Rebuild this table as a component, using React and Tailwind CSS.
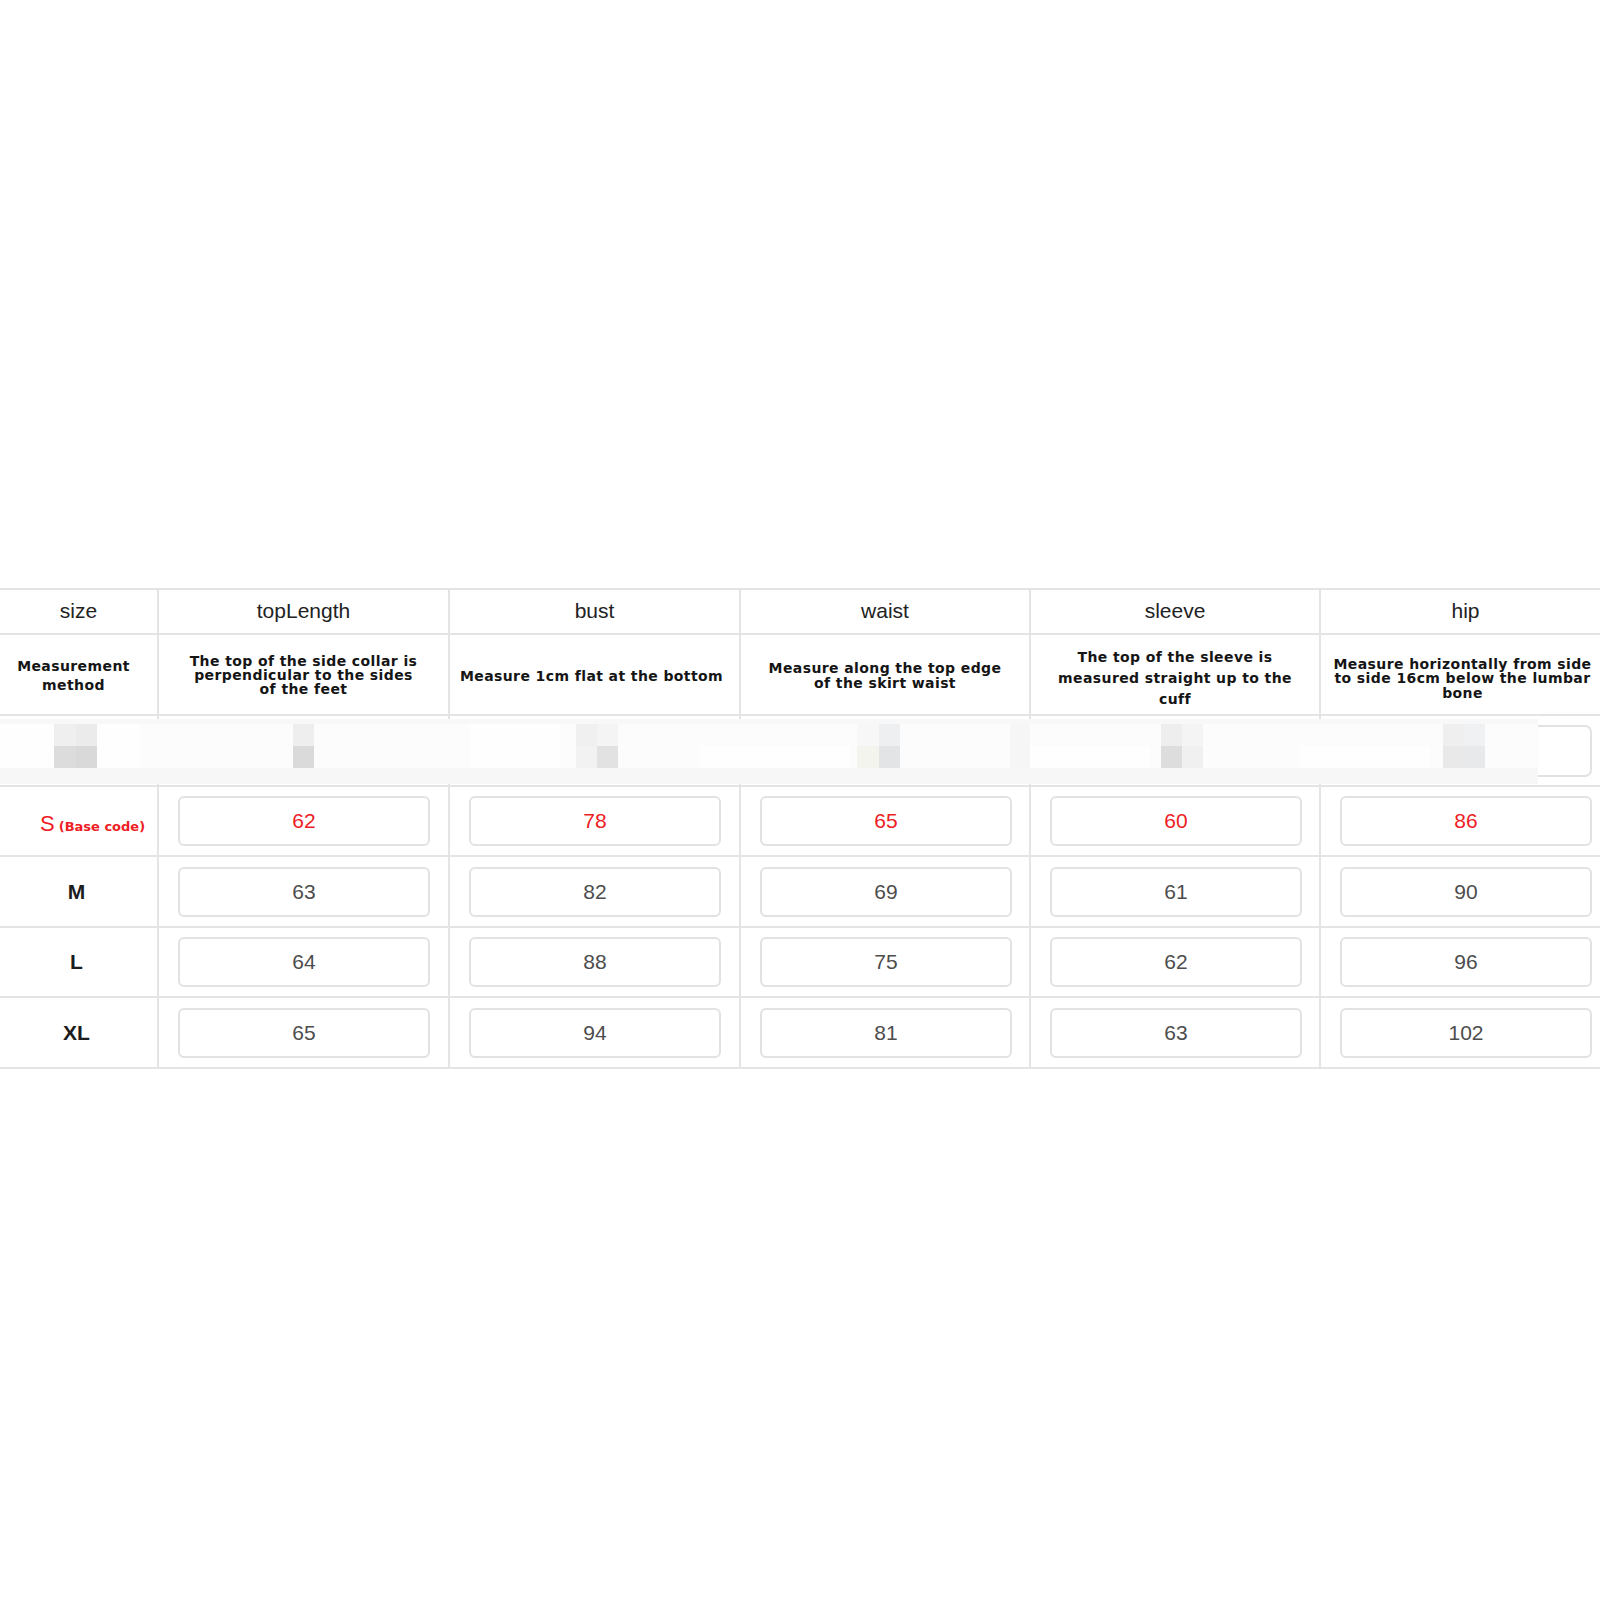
import React from "react";

const columns = [
  { key: "size", title: "size", width: "w-[159px]" },
  { key: "topLength", title: "topLength", width: "w-[291px]" },
  { key: "bust", title: "bust", width: "w-[291px]" },
  { key: "waist", title: "waist", width: "w-[290px]" },
  { key: "sleeve", title: "sleeve", width: "w-[290px]" },
  { key: "hip", title: "hip", width: "w-[291px]" },
];

const methods = [
  { lines: ["Measurement", "method"], leading: "leading-[19px]", extra: "pr-[10px] pt-[2px]" },
  { lines: ["The top of the side collar is", "perpendicular to the sides", "of the feet"], leading: "leading-[14px]", extra: "pt-[1px]" },
  { lines: ["Measure 1cm flat at the bottom"], leading: "leading-[15px]", extra: "pt-[3px] pr-[6px]" },
  { lines: ["Measure along the top edge", "of the skirt waist"], leading: "leading-[15px]", extra: "pt-[2px]" },
  { lines: ["The top of the sleeve is", "measured straight up to the", "cuff"], leading: "leading-[21px]", extra: "pt-[7px]" },
  { lines: ["Measure horizontally from side", "to side 16cm below the lumbar", "bone"], leading: "leading-[14.5px]", extra: "pt-[8px] pr-[6px]" },
];

const rows = [
  { size: "S", base: true, values: [62, 78, 65, 60, 86], h: "h-[70px]" },
  { size: "M", values: [63, 82, 69, 61, 90], h: "h-[71px]" },
  { size: "L", values: [64, 88, 75, 62, 96], h: "h-[70px]" },
  { size: "XL", values: [65, 94, 81, 63, 102], h: "h-[71px]" },
];

// pixelated picture strip that sits over the third row
const blocks = [
  [54, 8, 22, 22, "#efefef"], [76, 8, 21, 22, "#ebebeb"], [54, 30, 22, 22, "#dcdcdc"], [76, 30, 21, 22, "#d9d9d9"],
  [293, 8, 21, 22, "#eeeeee"], [293, 30, 21, 22, "#dadada"],
  [576, 8, 21, 22, "#f0f0f0"], [597, 8, 21, 22, "#f4f4f4"], [576, 30, 21, 22, "#f2f2f2"], [597, 30, 21, 22, "#e2e2e3"],
  [857, 8, 22, 22, "#f7f7f7"], [879, 8, 21, 22, "#eeeff1"], [857, 30, 22, 22, "#f4f4ee"], [879, 30, 21, 22, "#e3e4e5"],
  [1010, 8, 20, 44, "#f6f6f6"],
  [1161, 8, 21, 22, "#eeeeee"], [1182, 8, 21, 22, "#f4f4f4"], [1161, 30, 21, 22, "#dddddd"], [1182, 30, 21, 22, "#f0f0f0"],
  [1443, 8, 21, 22, "#efefef"], [1464, 8, 21, 22, "#f0f1f2"], [1443, 30, 21, 22, "#e9e9e9"], [1464, 30, 21, 22, "#e8e9ea"],
];

function Mosaic() {
  return (
    <svg className="absolute left-0 top-0" width="1600" height="69" viewBox="0 0 1600 69">
      <rect x="1341" y="10" width="250" height="50" rx="6" fill="#fff" stroke="#e2e2e4" strokeWidth="2" />
      <rect x="0" y="3" width="1538" height="65" fill="#fcfcfc" />
      <rect x="0" y="3" width="1538" height="5" fill="#f8f8f8" />
      <rect x="0" y="52" width="1538" height="16" fill="#f7f7f8" />
      <rect x="0" y="8" width="140" height="44" fill="#fefefe" />
      <rect x="470" y="8" width="90" height="44" fill="#fefefe" />
      <rect x="700" y="30" width="150" height="22" fill="#fefefe" />
      <rect x="1030" y="30" width="120" height="22" fill="#fefefe" />
      <rect x="1300" y="30" width="130" height="22" fill="#fefefe" />
      {blocks.map(([x, y, w, h, c], i) => (
        <rect key={i} x={x} y={y} width={w} height={h} fill={c} />
      ))}
    </svg>
  );
}

function App() {
  return (
    <div className="w-[1600px] h-[1600px] overflow-hidden bg-white pt-[588px]">
      <div className="w-[1612px] border-t-2 border-[#e4e4e4]">
        {/* header */}
        <div className="flex h-[45px]">
          {columns.map((c) => (
            <div
              key={c.key}
              className={`${c.width} flex items-center justify-center border-r-2 border-b-2 border-[#e4e4e4] text-[21px] text-[#222] font-['Liberation_Sans',Arial,sans-serif] pb-[2px]`}
            >
              {c.title}
            </div>
          ))}
        </div>

        {/* measurement method */}
        <div className="flex h-[81px]">
          {columns.map((c, i) => (
            <div
              key={c.key}
              className={`${c.width} flex flex-col items-center justify-center border-r-2 border-b-2 border-[#e4e4e4] text-center text-[14px] font-bold tracking-[0.4px] text-[#151515] font-['DejaVu_Sans',Verdana,sans-serif] ${methods[i].leading} ${methods[i].extra || ""}`}
            >
              {methods[i].lines.map((l) => (
                <span key={l} className="whitespace-nowrap">{l}</span>
              ))}
            </div>
          ))}
        </div>

        {/* blurred picture row */}
        <div className="relative flex h-[71px]">
          {columns.map((c) => (
            <div key={c.key} className={`${c.width} border-r-2 border-b-2 border-[#e4e4e4]`} />
          ))}
          <Mosaic />
        </div>

        {/* size rows */}
        {rows.map((r) => (
          <div key={r.size} className={`flex ${r.h}`}>
            <div className="w-[159px] flex items-center border-r-2 border-b-2 border-[#e4e4e4]">
              {r.base ? (
                <div className="flex items-baseline pl-[40px] pt-[4px] text-[#ee1c25]">
                  <span className="text-[22px] font-['Liberation_Sans',Arial,sans-serif]">S</span>
                  <span className="ml-[4px] text-[13px] font-bold font-['DejaVu_Sans',Verdana,sans-serif]">(Base code)</span>
                </div>
              ) : (
                <div className="w-full text-center pr-[4px] text-[21px] font-bold text-[#1c1c1c] font-['Liberation_Sans',Arial,sans-serif]">
                  {r.size}
                </div>
              )}
            </div>
            {r.values.map((v, i) => (
              <div
                key={i}
                className={`${columns[i + 1].width} flex items-center border-r-2 border-b-2 border-[#e4e4e4] pl-[19px]`}
              >
                <div
                  className={`w-[252px] h-[50px] flex items-center justify-center rounded-md border-2 border-[#e2e2e4] text-[21px] font-['Liberation_Sans',Arial,sans-serif] ${r.base ? "text-[#ee1c25]" : "text-[#4d4d4d]"}`}
                >
                  {v}
                </div>
              </div>
            ))}
          </div>
        ))}
      </div>
    </div>
  );
}

export default App;
